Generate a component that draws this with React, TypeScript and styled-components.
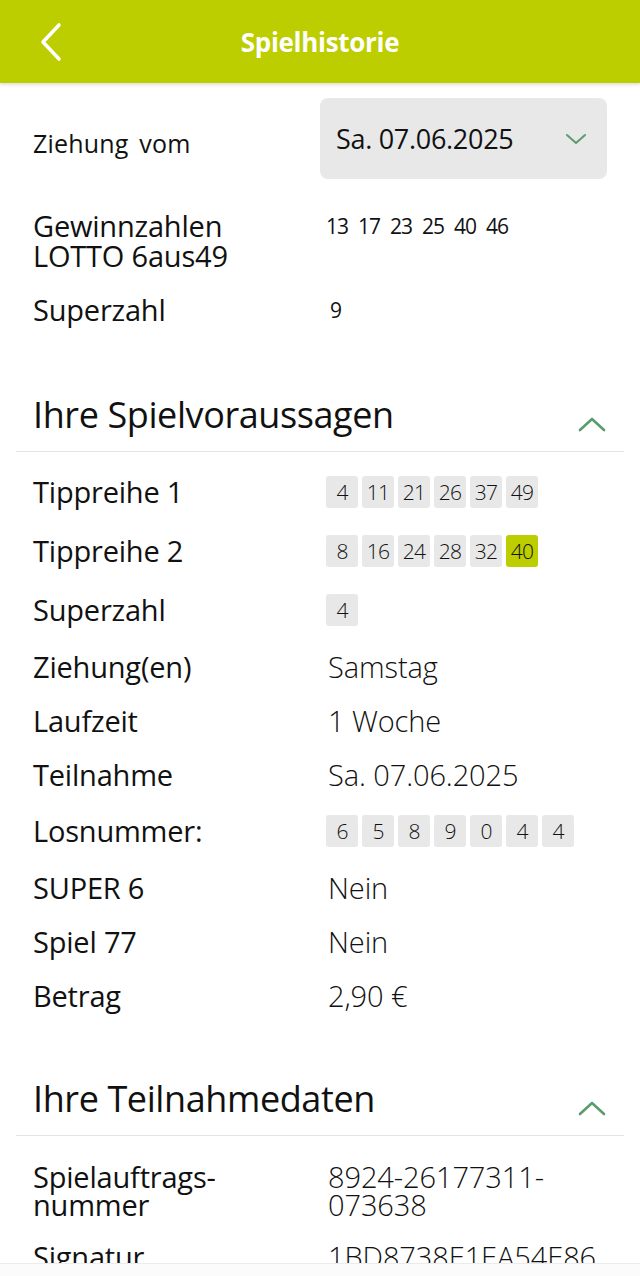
import React from "react";
import styled, { createGlobalStyle } from "styled-components";

const GREEN = "#bccd00";
const ICON_GREEN = "#5a9c6e";
const FONT = `"Open Sans", "Noto Sans", sans-serif`;

const Global = createGlobalStyle`
  html, body { margin: 0; padding: 0; background: #ffffff; }
  body { font-family: ${FONT}; color: #111; }
  * { box-sizing: border-box; }
`;

const Page = styled.div`
  width: 640px;
  height: 1276px;
  display: flex;
  flex-direction: column;
  overflow: hidden;
  background: #fff;
`;

const Header = styled.header`
  flex: 0 0 83px;
  background: ${GREEN};
  display: grid;
  grid-template-columns: 96px 1fr 96px;
  align-items: center;
  box-shadow: 0 2px 3px rgba(0, 0, 0, 0.12);
  position: relative;
  z-index: 2;
`;

const BackButton = styled.button`
  border: 0;
  background: transparent;
  padding: 0 0 0 38px;
  height: 83px;
  display: flex;
  align-items: center;
  cursor: pointer;
`;

const Title = styled.h1`
  margin: 0;
  text-align: center;
  color: #fff;
  font-family: ${FONT};
  font-weight: 700;
  font-size: 26px;
  letter-spacing: -0.3px;
`;

const Scroll = styled.main`
  flex: 1 1 auto;
  overflow: hidden;
  padding: 15px 16px 0;
`;

const Footer = styled.div`
  flex: 0 0 13px;
  border-top: 1px solid #ececec;
  background: #fbfbfb;
`;

const TopGrid = styled.div`
  display: grid;
  grid-template-columns: 287px 1fr;
  padding-left: 17px;
  padding-right: 17px;
  align-items: center;
`;

const TopLabel = styled.div<{ $mt?: number }>`
  font-size: 29px;
  line-height: 30px;
  font-weight: 400;
  letter-spacing: -0.2px;
  margin-top: ${(p) => p.$mt ?? 0}px;
  align-self: ${(p) => (p.$mt ? "start" : "center")};
`;

const SmallLabel = styled(TopLabel)`
  font-size: 25px;
  letter-spacing: 0.2px;
  word-spacing: 4px;
  padding-top: 9px;
`;

const Dropdown = styled.div`
  height: 81px;
  background: #e8e8e8;
  border-radius: 8px;
  display: flex;
  align-items: center;
  justify-content: space-between;
  padding: 0 20px 0 16px;
  font-size: 27px;
  font-weight: 400;
  letter-spacing: -0.3px;
`;

const WinNumbers = styled.div<{ $mt: number; $pl?: number }>`
  display: flex;
  gap: 10px;
  padding-left: ${(p) => p.$pl ?? 6}px;
  margin-top: ${(p) => p.$mt}px;
  align-self: start;
  font-size: 21px;
  line-height: 30px;
  font-weight: 500;
  letter-spacing: -1px;
`;

const SectionHead = styled.div<{ $mt: number }>`
  margin-top: ${(p) => p.$mt}px;
  display: flex;
  justify-content: space-between;
  align-items: flex-end;
  padding: 0 17px 16px 17px;
  border-bottom: 1px solid #e4e4e4;
`;

const SectionTitle = styled.h2`
  margin: 0;
  font-family: ${FONT};
  font-size: 36px;
  line-height: 40px;
  font-weight: 400;
  letter-spacing: -0.4px;
`;

const ChevronWrap = styled.span`
  display: flex;
  padding-bottom: 2px;
`;

const Rows = styled.div<{ $mt: number }>`
  margin-top: ${(p) => p.$mt}px;
  display: flex;
  flex-direction: column;
  gap: 22px;
  padding-left: 17px;
`;

const Row = styled.div<{ $boxed?: boolean }>`
  display: grid;
  grid-template-columns: 295px 1fr;
  align-items: center;
  padding: ${(p) => (p.$boxed ? "2px 0 3px" : "0")};
`;

const Label = styled.div<{ $lh?: number }>`
  font-size: 29px;
  line-height: ${(p) => p.$lh ?? 32}px;
  font-weight: 400;
  letter-spacing: -0.2px;
`;

const Value = styled.div<{ $lh?: number }>`
  font-size: 29px;
  line-height: ${(p) => p.$lh ?? 32}px;
  font-weight: 300;
  letter-spacing: -0.1px;
`;

const Boxes = styled.div`
  display: flex;
  gap: 4px;
  margin-left: -2px;
`;

const NumBox = styled.span<{ $hit?: boolean }>`
  width: 32px;
  height: 32px;
  border-radius: 3px;
  background: ${(p) => (p.$hit ? GREEN : "#e8e8e8")};
  display: flex;
  align-items: center;
  justify-content: center;
  font-size: 21px;
  font-weight: 300;
  letter-spacing: -0.8px;
`;

const ChevronUp = () => (
  <svg width="30" height="18" viewBox="0 0 30 18" fill="none">
    <path d="M3 15 L15 4 L27 15" stroke={ICON_GREEN} strokeWidth="2.6" strokeLinecap="round" strokeLinejoin="round" />
  </svg>
);

const ChevronDown = () => (
  <svg width="22" height="14" viewBox="0 0 22 14" fill="none">
    <path d="M2 3 L11 11 L20 3" stroke={ICON_GREEN} strokeWidth="2" strokeLinecap="round" strokeLinejoin="round" />
  </svg>
);

const BackIcon = () => (
  <svg width="26" height="40" viewBox="0 0 26 40" fill="none">
    <path d="M21 3 L5 20 L21 37" stroke="#fff" strokeWidth="3.6" strokeLinecap="round" strokeLinejoin="round" />
  </svg>
);

const NumberBoxes = ({ nums, hits = [] }: { nums: string[]; hits?: number[] }) => (
  <Boxes>
    {nums.map((n, i) => (
      <NumBox key={i} $hit={hits.includes(i)}>
        {n}
      </NumBox>
    ))}
  </Boxes>
);

export default function App() {
  return (
    <Page>
      <Global />
      <Header>
        <BackButton aria-label="Zurück">
          <BackIcon />
        </BackButton>
        <Title>Spielhistorie</Title>
        <span />
      </Header>
      <Scroll>
        <TopGrid>
          <SmallLabel>Ziehung vom</SmallLabel>
          <Dropdown>
            <span>Sa. 07.06.2025</span>
            <ChevronDown />
          </Dropdown>
          <TopLabel $mt={32}>
            Gewinnzahlen
            <br />
            LOTTO 6aus49
          </TopLabel>
          <WinNumbers $mt={32}>
            {["13", "17", "23", "25", "40", "46"].map((n) => (
              <span key={n}>{n}</span>
            ))}
          </WinNumbers>
          <TopLabel $mt={24}>Superzahl</TopLabel>
          <WinNumbers $mt={24} $pl={10}>
            <span>9</span>
          </WinNumbers>
        </TopGrid>

        <SectionHead $mt={70}>
          <SectionTitle>Ihre Spielvoraussagen</SectionTitle>
          <ChevronWrap>
            <ChevronUp />
          </ChevronWrap>
        </SectionHead>
        <Rows $mt={22}>
          <Row $boxed>
            <Label>Tippreihe 1</Label>
            <NumberBoxes nums={["4", "11", "21", "26", "37", "49"]} />
          </Row>
          <Row $boxed>
            <Label>Tippreihe 2</Label>
            <NumberBoxes nums={["8", "16", "24", "28", "32", "40"]} hits={[5]} />
          </Row>
          <Row $boxed>
            <Label>Superzahl</Label>
            <NumberBoxes nums={["4"]} />
          </Row>
          <Row>
            <Label>Ziehung(en)</Label>
            <Value>Samstag</Value>
          </Row>
          <Row>
            <Label>Laufzeit</Label>
            <Value>1 Woche</Value>
          </Row>
          <Row>
            <Label>Teilnahme</Label>
            <Value>Sa. 07.06.2025</Value>
          </Row>
          <Row $boxed>
            <Label>Losnummer:</Label>
            <NumberBoxes nums={["6", "5", "8", "9", "0", "4", "4"]} />
          </Row>
          <Row>
            <Label>SUPER 6</Label>
            <Value>Nein</Value>
          </Row>
          <Row>
            <Label>Spiel 77</Label>
            <Value>Nein</Value>
          </Row>
          <Row>
            <Label>Betrag</Label>
            <Value>2,90 €</Value>
          </Row>
        </Rows>

        <SectionHead $mt={67}>
          <SectionTitle>Ihre Teilnahmedaten</SectionTitle>
          <ChevronWrap>
            <ChevronUp />
          </ChevronWrap>
        </SectionHead>
        <Rows $mt={27}>
          <Row>
            <Label $lh={28}>
              Spielauftrags-
              <br />
              nummer
            </Label>
            <Value $lh={28}>
              8924-26177311-
              <br />
              073638
            </Value>
          </Row>
          <Row>
            <Label>Signatur</Label>
            <Value>1BD8738E1EA54E86</Value>
          </Row>
        </Rows>
      </Scroll>
      <Footer />
    </Page>
  );
}
